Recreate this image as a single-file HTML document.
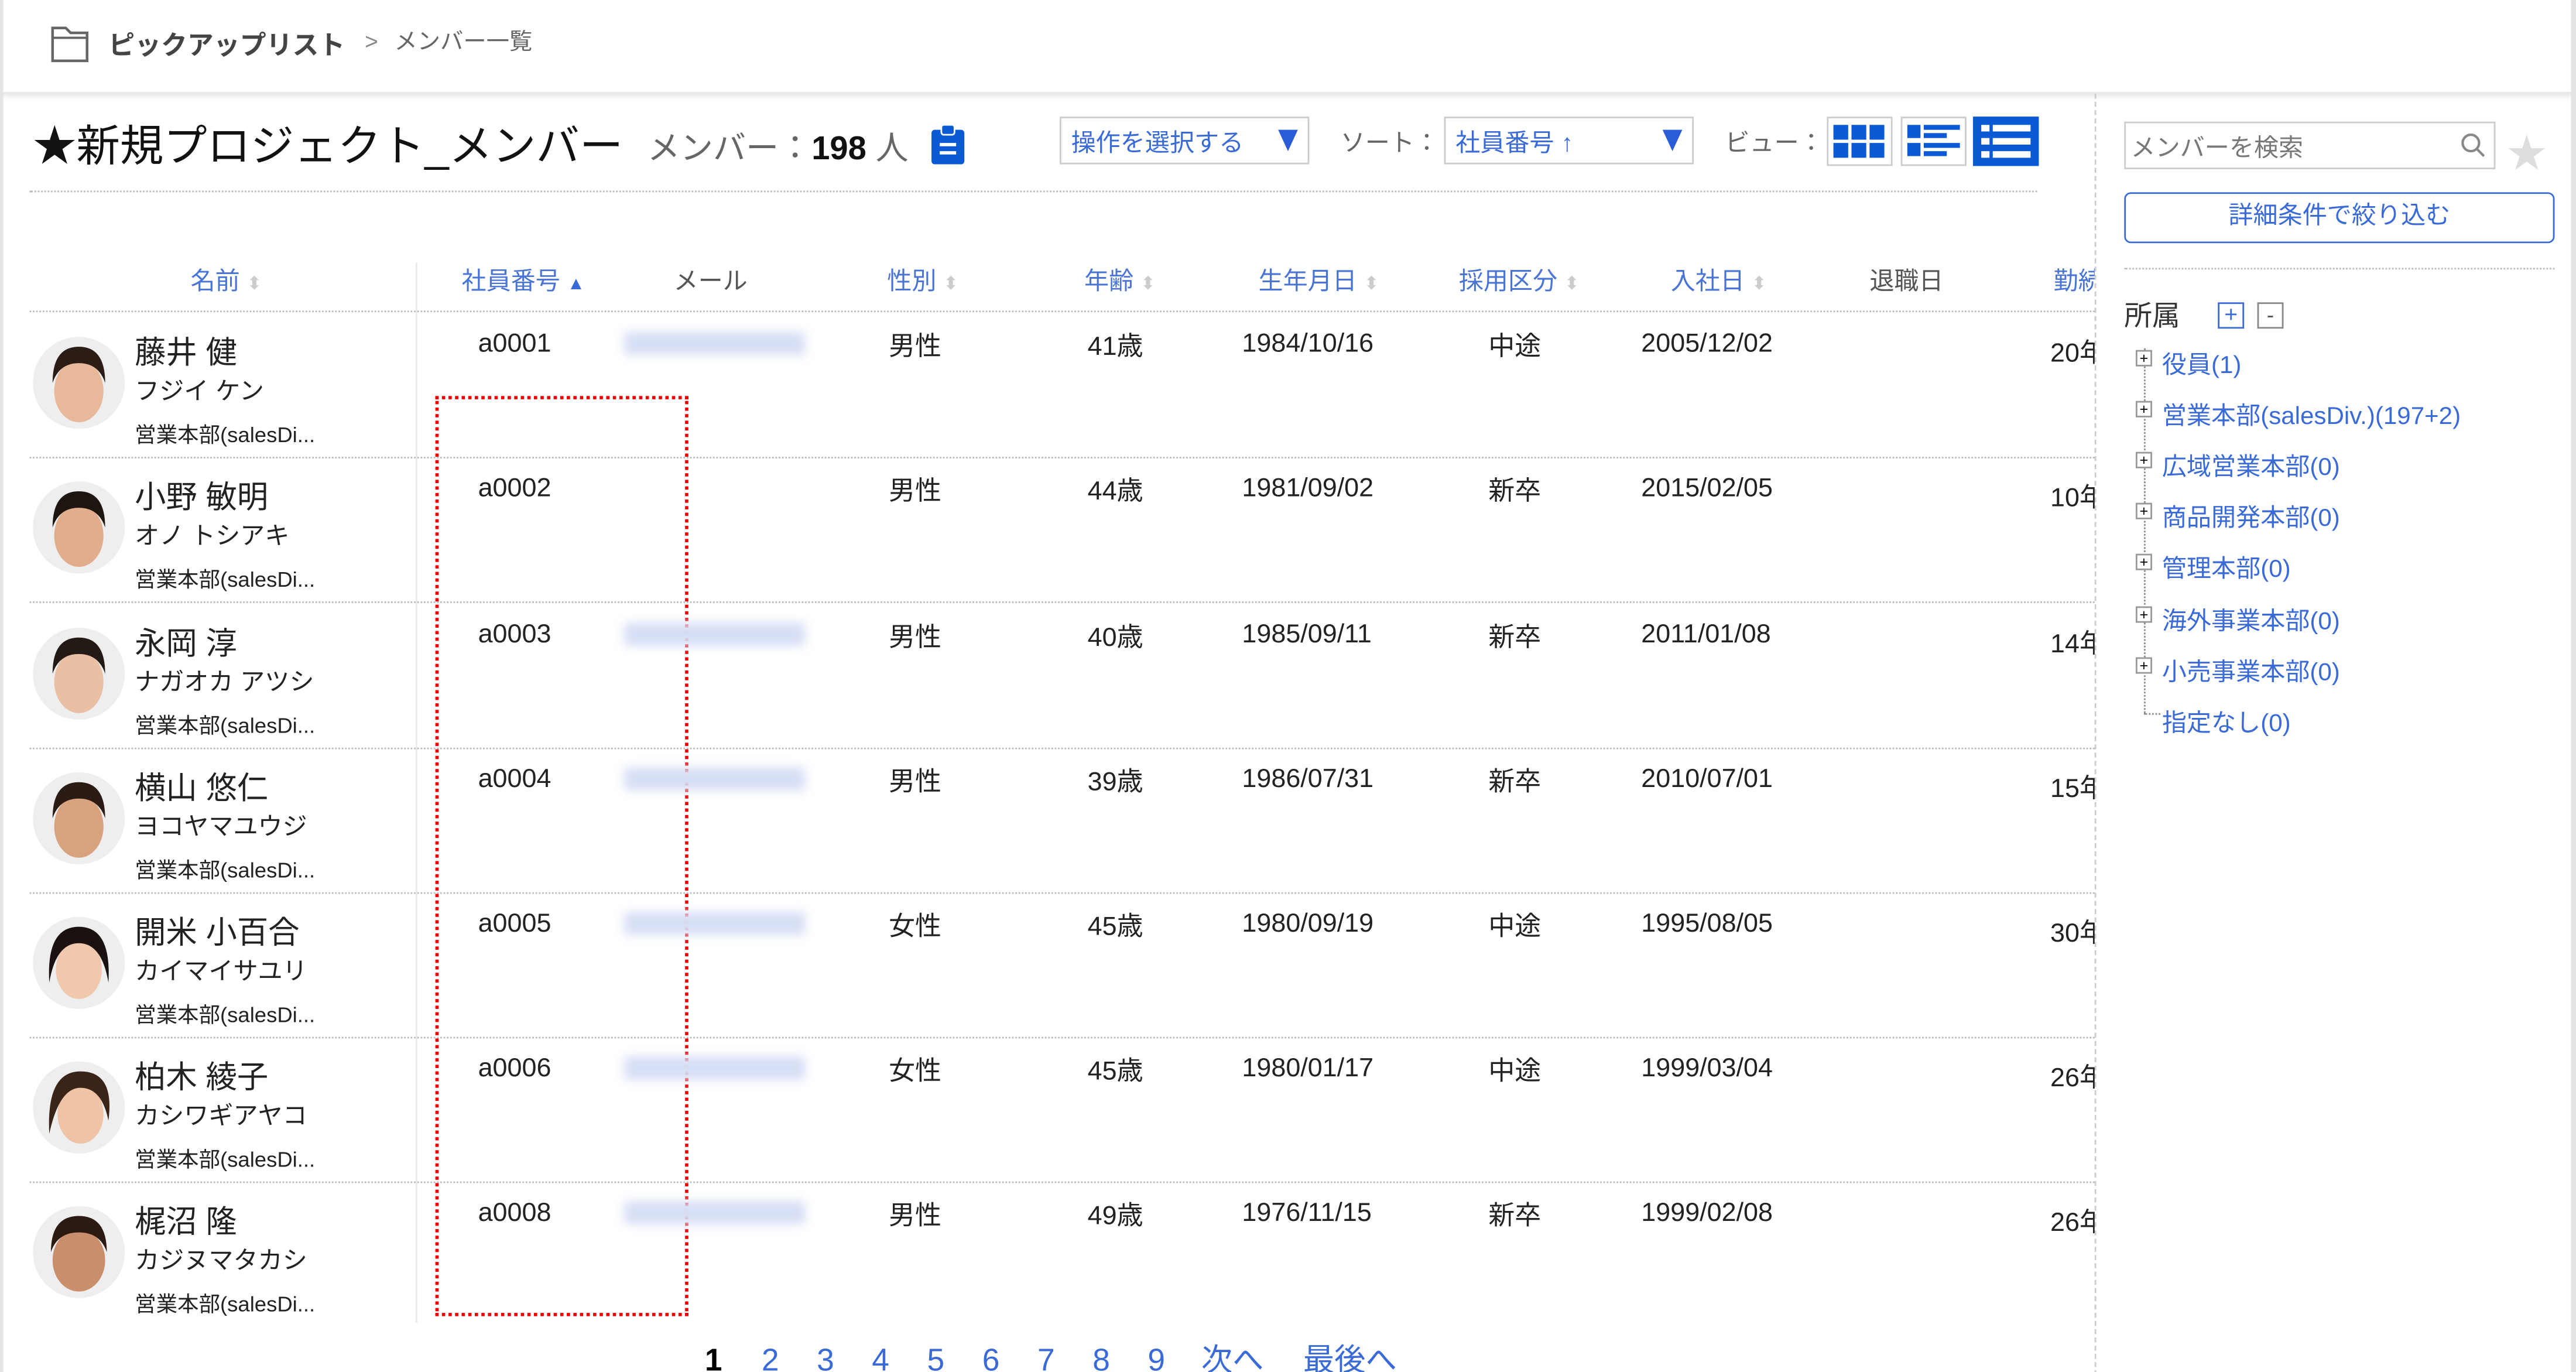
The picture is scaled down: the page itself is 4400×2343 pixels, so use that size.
<!DOCTYPE html>
<html><head><meta charset="utf-8"><style>
*{margin:0;padding:0;box-sizing:border-box}
body{width:4400px;height:2343px;overflow:hidden;background:#fff;font-family:"Liberation Sans","Noto Sans CJK JP",sans-serif;color:#222}
#w{position:absolute;left:0;top:0;width:1568px;height:835px;transform:scale(2.8061);transform-origin:0 0;overflow:hidden}
.a{position:absolute;white-space:nowrap}
.hd{color:#4a74d4;font-size:15px;top:160px}
.g{color:#666}
.dot{position:absolute;height:0;border-top:1px dotted #bbb}
.sel{position:absolute;border:1px solid #ccc;height:29px;top:71px;font-size:15px;color:#3a6ad6;padding:4px 6px}
.tri{position:absolute;right:6px;top:7px;width:0;height:0;border-left:6px solid transparent;border-right:6px solid transparent;border-top:13px solid #2a5cd6}
.vb{position:absolute;top:71px;width:40px;height:30px;border:1px solid #ccc}
.ti{position:absolute;left:1316px;font-size:15px;color:#3a6ad6}
.tx{position:absolute;left:1300px;width:10px;height:10px;border:1px solid #999;font-size:9px;line-height:8px;text-align:center;color:#000;background:#fff}
.d{font-size:16px;position:absolute;top:7px}
.l{top:11px}
.sa{color:#ccc;font-size:11px}
</style></head><body><div id="w">
<div class="a" style="left:0;top:0;width:1568px;height:56px;background:#fff;box-shadow:0 2px 4px rgba(0,0,0,.12)"></div>
<div class="a" style="left:0;top:0;width:2px;height:835px;background:#e4e4e4"></div>
<div class="a" style="left:1565px;top:0;width:3px;height:835px;background:#e4e4e4"></div>
<svg class="a" style="left:30px;top:14px" width="26" height="26" viewBox="0 0 26 26"><path d="M2 3h8l3 3h10v17H2z" fill="none" stroke="#666" stroke-width="1.6"/><path d="M2 9h21" stroke="#666" stroke-width="1.4"/></svg>
<div class="a" style="left:66px;top:14px;font-size:16px;font-weight:bold;color:#444">ピックアップリスト</div>
<div class="a" style="left:222px;top:17px;font-size:14px;color:#888">&gt;</div>
<div class="a" style="left:240px;top:15px;font-size:14px;color:#666">メンバー一覧</div>

<div class="a" style="left:20px;top:67px;font-size:26.5px;color:#111">★新規プロジェクト_メンバー</div>
<div class="a" style="left:394px;top:74px;font-size:20px;color:#666">メンバー：<b style="color:#111">198</b> 人</div>
<svg class="a" style="left:566px;top:76px" width="22" height="24" viewBox="0 0 22 24"><rect x="1" y="3" width="20" height="21" rx="2" fill="#0a5ad6"/><rect x="7" y="0" width="8" height="6" rx="1.5" fill="#0a5ad6" stroke="#fff" stroke-width="1"/><rect x="6" y="11" width="10" height="2" fill="#fff"/><rect x="6" y="16" width="10" height="2" fill="#fff"/></svg>
<div class="sel" style="left:645px;width:152px">操作を選択する<div class="tri"></div></div>
<div class="a g" style="left:816px;top:76px;font-size:15px">ソート：</div>
<div class="sel" style="left:879px;width:152px">社員番号 ↑<div class="tri"></div></div>
<div class="a g" style="left:1050px;top:76px;font-size:15px">ビュー：</div>
<div class="vb" style="left:1112px"><svg width="38" height="28" viewBox="0 0 38 28"><g fill="#0a5ad6"><rect x="3" y="4" width="9" height="9"/><rect x="14" y="4" width="9" height="9"/><rect x="25" y="4" width="9" height="9"/><rect x="3" y="15" width="9" height="9"/><rect x="14" y="15" width="9" height="9"/><rect x="25" y="15" width="9" height="9"/></g></svg></div>
<div class="vb" style="left:1157px"><svg width="38" height="28" viewBox="0 0 38 28"><g fill="#0a5ad6"><rect x="3" y="4" width="8" height="8"/><rect x="13" y="4" width="22" height="3"/><rect x="13" y="9" width="14" height="3"/><rect x="3" y="15" width="8" height="8"/><rect x="13" y="15" width="22" height="3"/><rect x="13" y="20" width="14" height="3"/></g></svg></div>
<div class="vb" style="left:1201px;background:#0a5ad6;border-color:#0a5ad6"><svg width="38" height="28" viewBox="0 0 38 28"><g fill="#fff"><rect x="4" y="4" width="5" height="4"/><rect x="11" y="4" width="23" height="4"/><rect x="4" y="12" width="5" height="4"/><rect x="11" y="12" width="23" height="4"/><rect x="4" y="20" width="5" height="4"/><rect x="11" y="20" width="23" height="4"/></g></svg></div>
<div class="dot" style="left:18px;top:116px;width:1222px"></div>

<div class="a" style="left:1275px;top:57px;width:0;height:780px;border-left:1px dashed #ccc"></div>
<div class="a" style="left:1293px;top:74px;width:226px;height:29px;border:1px solid #ccc;font-size:15px;color:#777;padding:4px 3px">メンバーを検索</div>
<svg class="a" style="left:1497px;top:80px" width="16" height="16" viewBox="0 0 16 16"><circle cx="7" cy="7" r="5" fill="none" stroke="#888" stroke-width="1.5"/><path d="M11 11l4 4" stroke="#888" stroke-width="1.5"/></svg>
<div class="a" style="left:1526px;top:74px;font-size:24px;color:#ddd">★</div>
<div class="a" style="left:1293px;top:117px;width:262px;height:31px;border:1.5px solid #3a6ad6;border-radius:4px;font-size:15px;color:#3a6ad6;text-align:center;line-height:28px">詳細条件で絞り込む</div>
<div class="dot" style="left:1293px;top:163px;width:262px"></div>
<div class="a" style="left:1293px;top:178px;font-size:17px;color:#333">所属</div>
<div class="a" style="left:1350px;top:184px;width:16px;height:16px;border:1px solid #3a6ad6;color:#3a6ad6;font-size:14px;line-height:13px;text-align:center">+</div>
<div class="a" style="left:1374px;top:184px;width:16px;height:16px;border:1px solid #888;color:#555;font-size:13px;line-height:13px;text-align:center">-</div>
<div class="a" style="left:1305px;top:212px;width:0;height:222px;border-left:1px dotted #888"></div>
<div class="a" style="left:1305px;top:434px;width:10px;border-top:1px dotted #888"></div>
<div class="tx" style="top:213px">+</div><div class="ti" style="top:211px">役員(1)</div>
<div class="tx" style="top:244px">+</div><div class="ti" style="top:242px">営業本部(salesDiv.)(197+2)</div>
<div class="tx" style="top:275px">+</div><div class="ti" style="top:273px">広域営業本部(0)</div>
<div class="tx" style="top:306px">+</div><div class="ti" style="top:304px">商品開発本部(0)</div>
<div class="tx" style="top:337px">+</div><div class="ti" style="top:335px">管理本部(0)</div>
<div class="tx" style="top:369px">+</div><div class="ti" style="top:367px">海外事業本部(0)</div>
<div class="tx" style="top:400px">+</div><div class="ti" style="top:398px">小売事業本部(0)</div>
<div class="ti" style="top:429px">指定なし(0)</div>

<div class="a hd" style="left:116px">名前 <span class="sa">⬍</span></div>
<div class="a" style="left:253px;top:160px;width:0;height:645px;border-left:1px solid #e8e8e8"></div>
<div class="a hd" style="left:281px">社員番号 <span style="color:#3a6ad6;font-size:11px">▲</span></div>
<div class="a hd" style="left:410px;color:#555">メール</div>
<div class="a hd" style="left:540px">性別 <span class="sa">⬍</span></div>
<div class="a hd" style="left:660px">年齢 <span class="sa">⬍</span></div>
<div class="a hd" style="left:766px">生年月日 <span class="sa">⬍</span></div>
<div class="a hd" style="left:888px">採用区分 <span class="sa">⬍</span></div>
<div class="a hd" style="left:1017px">入社日 <span class="sa">⬍</span></div>
<div class="a hd" style="left:1138px;color:#555">退職日</div>
<div class="a" style="left:1250px;top:160px;width:25px;overflow:hidden;font-size:15px;color:#4a74d4">勤続</div>
<div class="dot" style="left:18px;top:189px;width:1257px"></div>

<div class="a" style="left:265px;top:241px;width:154px;height:560px;border:2px dotted #e00"></div>
<div class="a" style="left:429px;top:813px;font-size:19px;color:#3a6ad6"><b style="color:#000">1</b><span style="margin-left:24px">2</span><span style="margin-left:23px">3</span><span style="margin-left:23px">4</span><span style="margin-left:23px">5</span><span style="margin-left:23px">6</span><span style="margin-left:23px">7</span><span style="margin-left:23px">8</span><span style="margin-left:23px">9</span><span style="margin-left:22px">次へ</span><span style="margin-left:24px">最後へ</span></div>

<div class="a" style="left:0;top:190px">
 <svg class="a" style="left:20px;top:15px" width="56" height="56"><circle cx="28" cy="28" r="28" fill="#eee"/><ellipse cx="28" cy="33" rx="15" ry="19" fill="#e7b89a"/><path d="M12 28q0-22 16-22t16 22q-4-12-16-12t-16 12z" fill="#2b1d16"/></svg>
 <div class="a" style="left:82px;top:10px;font-size:19px">藤井 健</div><div class="a" style="left:82px;top:37px;font-size:15px">フジイ ケン</div><div class="a" style="left:82px;top:64px;font-size:13px">営業本部(salesDi...</div>
 <div class="d l" style="left:291px">a0001</div><div class="a" style="left:380px;top:12px;width:110px;height:14px;background:#d6def5;filter:blur(3px)"></div><div class="d" style="left:541px">男性</div><div class="d" style="left:662px">41歳</div><div class="d l" style="left:756px">1984/10/16</div><div class="d" style="left:906px">中途</div><div class="d l" style="left:999px">2005/12/02</div><div class="d l" style="left:1248px;width:27px;overflow:hidden">20年</div>
 <div class="dot" style="left:18px;top:88px;width:1257px"></div>
</div>
<div class="a" style="left:0;top:278px">
 <svg class="a" style="left:20px;top:15px" width="56" height="56"><circle cx="28" cy="28" r="28" fill="#eee"/><ellipse cx="28" cy="33" rx="15" ry="19" fill="#e2ad8c"/><path d="M12 28q0-22 16-22t16 22q-4-12-16-12t-16 12z" fill="#1e1511"/></svg>
 <div class="a" style="left:82px;top:10px;font-size:19px">小野 敏明</div><div class="a" style="left:82px;top:37px;font-size:15px">オノ トシアキ</div><div class="a" style="left:82px;top:64px;font-size:13px">営業本部(salesDi...</div>
 <div class="d l" style="left:291px">a0002</div><div class="d" style="left:541px">男性</div><div class="d" style="left:662px">44歳</div><div class="d l" style="left:756px">1981/09/02</div><div class="d" style="left:906px">新卒</div><div class="d l" style="left:999px">2015/02/05</div><div class="d l" style="left:1248px;width:27px;overflow:hidden">10年</div>
 <div class="dot" style="left:18px;top:88px;width:1257px"></div>
</div>
<div class="a" style="left:0;top:367px">
 <svg class="a" style="left:20px;top:15px" width="56" height="56"><circle cx="28" cy="28" r="28" fill="#eee"/><ellipse cx="28" cy="33" rx="15" ry="19" fill="#eac0a5"/><path d="M12 28q0-22 16-22t16 22q-4-12-16-12t-16 12z" fill="#231915"/></svg>
 <div class="a" style="left:82px;top:10px;font-size:19px">永岡 淳</div><div class="a" style="left:82px;top:37px;font-size:15px">ナガオカ アツシ</div><div class="a" style="left:82px;top:64px;font-size:13px">営業本部(salesDi...</div>
 <div class="d l" style="left:291px">a0003</div><div class="a" style="left:380px;top:12px;width:110px;height:14px;background:#d6def5;filter:blur(3px)"></div><div class="d" style="left:541px">男性</div><div class="d" style="left:662px">40歳</div><div class="d l" style="left:756px">1985/09/11</div><div class="d" style="left:906px">新卒</div><div class="d l" style="left:999px">2011/01/08</div><div class="d l" style="left:1248px;width:27px;overflow:hidden">14年</div>
 <div class="dot" style="left:18px;top:88px;width:1257px"></div>
</div>
<div class="a" style="left:0;top:455px">
 <svg class="a" style="left:20px;top:15px" width="56" height="56"><circle cx="28" cy="28" r="28" fill="#eee"/><ellipse cx="28" cy="33" rx="15" ry="19" fill="#d9a27f"/><path d="M12 28q0-22 16-22t16 22q-4-12-16-12t-16 12z" fill="#2a1c14"/></svg>
 <div class="a" style="left:82px;top:10px;font-size:19px">横山 悠仁</div><div class="a" style="left:82px;top:37px;font-size:15px">ヨコヤマユウジ</div><div class="a" style="left:82px;top:64px;font-size:13px">営業本部(salesDi...</div>
 <div class="d l" style="left:291px">a0004</div><div class="a" style="left:380px;top:12px;width:110px;height:14px;background:#d6def5;filter:blur(3px)"></div><div class="d" style="left:541px">男性</div><div class="d" style="left:662px">39歳</div><div class="d l" style="left:756px">1986/07/31</div><div class="d" style="left:906px">新卒</div><div class="d l" style="left:999px">2010/07/01</div><div class="d l" style="left:1248px;width:27px;overflow:hidden">15年</div>
 <div class="dot" style="left:18px;top:88px;width:1257px"></div>
</div>
<div class="a" style="left:0;top:543px">
 <svg class="a" style="left:20px;top:15px" width="56" height="56"><circle cx="28" cy="28" r="28" fill="#eee"/><ellipse cx="28" cy="32" rx="14" ry="18" fill="#f0c8ae"/><path d="M10 40q-2-34 18-34t18 34q-4-24-18-24t-18 24z" fill="#1a1210"/></svg>
 <div class="a" style="left:82px;top:10px;font-size:19px">開米 小百合</div><div class="a" style="left:82px;top:37px;font-size:15px">カイマイサユリ</div><div class="a" style="left:82px;top:64px;font-size:13px">営業本部(salesDi...</div>
 <div class="d l" style="left:291px">a0005</div><div class="a" style="left:380px;top:12px;width:110px;height:14px;background:#d6def5;filter:blur(3px)"></div><div class="d" style="left:541px">女性</div><div class="d" style="left:662px">45歳</div><div class="d l" style="left:756px">1980/09/19</div><div class="d" style="left:906px">中途</div><div class="d l" style="left:999px">1995/08/05</div><div class="d l" style="left:1248px;width:27px;overflow:hidden">30年</div>
 <div class="dot" style="left:18px;top:88px;width:1257px"></div>
</div>
<div class="a" style="left:0;top:631px">
 <svg class="a" style="left:20px;top:15px" width="56" height="56"><circle cx="28" cy="28" r="28" fill="#eee"/><ellipse cx="29" cy="32" rx="14" ry="18" fill="#efc4a6"/><path d="M10 44q-2-38 19-38t17 30q-4-20-17-20t-19 28z" fill="#3a2418"/></svg>
 <div class="a" style="left:82px;top:10px;font-size:19px">柏木 綾子</div><div class="a" style="left:82px;top:37px;font-size:15px">カシワギアヤコ</div><div class="a" style="left:82px;top:64px;font-size:13px">営業本部(salesDi...</div>
 <div class="d l" style="left:291px">a0006</div><div class="a" style="left:380px;top:12px;width:110px;height:14px;background:#d6def5;filter:blur(3px)"></div><div class="d" style="left:541px">女性</div><div class="d" style="left:662px">45歳</div><div class="d l" style="left:756px">1980/01/17</div><div class="d" style="left:906px">中途</div><div class="d l" style="left:999px">1999/03/04</div><div class="d l" style="left:1248px;width:27px;overflow:hidden">26年</div>
 <div class="dot" style="left:18px;top:88px;width:1257px"></div>
</div>
<div class="a" style="left:0;top:719px">
 <svg class="a" style="left:20px;top:15px" width="56" height="56"><circle cx="28" cy="28" r="28" fill="#eee"/><ellipse cx="28" cy="33" rx="16" ry="19" fill="#c98e6c"/><path d="M11 28q0-22 17-22t17 22q-4-12-17-12t-17 12z" fill="#2a1a12"/></svg>
 <div class="a" style="left:82px;top:10px;font-size:19px">梶沼 隆</div><div class="a" style="left:82px;top:37px;font-size:15px">カジヌマタカシ</div><div class="a" style="left:82px;top:64px;font-size:13px">営業本部(salesDi...</div>
 <div class="d l" style="left:291px">a0008</div><div class="a" style="left:380px;top:12px;width:110px;height:14px;background:#d6def5;filter:blur(3px)"></div><div class="d" style="left:541px">男性</div><div class="d" style="left:662px">49歳</div><div class="d l" style="left:756px">1976/11/15</div><div class="d" style="left:906px">新卒</div><div class="d l" style="left:999px">1999/02/08</div><div class="d l" style="left:1248px;width:27px;overflow:hidden">26年</div>
</div>
</div></body></html>
